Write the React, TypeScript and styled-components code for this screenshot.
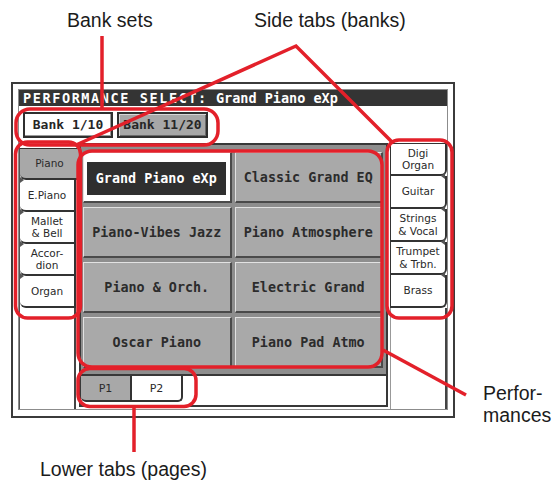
import React from "react";
import styled, { createGlobalStyle } from "styled-components";

const RED = "#e3202a";
const LCD = `"DejaVu Sans Mono", "Liberation Mono", monospace`;
const SMALL = `"DejaVu Sans", "Liberation Sans", sans-serif`;

const GlobalStyle = createGlobalStyle`
  html, body { margin: 0; padding: 0; background: #fff; }
  body { font-family: "Liberation Sans", Arial, sans-serif; }
`;

const Page = styled.div`
  position: relative;
  width: 554px;
  height: 482px;
  overflow: hidden;
  color: #1b1b1b;
`;

const TopLabels = styled.div`
  display: grid;
  grid-template-columns: 187px auto;
  height: 82px;
  padding: 7px 0 0 67px;
  box-sizing: border-box;
`;

const Caption = styled.div`
  font-size: 19.5px;
  line-height: 26px;
  white-space: nowrap;
`;

const SideCaption = styled(Caption)`
  margin: 300px 0 0 28px;
  line-height: 22px;
`;

const BottomCaption = styled(Caption)`
  margin: 38px 0 0 40px;
`;

const Middle = styled.div`
  display: flex;
  align-items: flex-start;
  height: 336px;
`;

const Screen = styled.div`
  width: 444px;
  height: 336px;
  margin-left: 11px;
  box-sizing: border-box;
  border: 2px solid #3b3b3b;
  padding: 5px 5px 6px 5px;
  background: #fff;
`;

const Panel = styled.div`
  height: 100%;
  box-sizing: border-box;
  border: 1px solid #8c8c8c;
  display: flex;
  flex-direction: column;
`;

const TitleBar = styled.div`
  height: 16px;
  background: #343434;
  color: #fff;
  font: bold 13.5px/16px ${LCD};
  padding-left: 4px;
  white-space: nowrap;
  overflow: hidden;
`;

const TitleCaps = styled.span`
  letter-spacing: 1.6px;
`;

const BankRow = styled.div`
  display: flex;
  gap: 4px;
  padding: 6px 0 0 4px;
`;

const BankTab = styled.div<{ $active?: boolean; $w: number }>`
  width: ${(p) => p.$w}px;
  height: 26px;
  box-sizing: border-box;
  border: 2px solid #2f2f2f;
  background: ${(p) => (p.$active ? "#fff" : "#a7a7a7")};
  box-shadow: ${(p) =>
    p.$active ? "inset -1px -1px 0 #9a9a9a" : "inset 1px 1px 0 #d6d6d6, inset -1px -1px 0 #6a6a6a"};
  font: bold 13px/22px ${LCD};
  color: #262626;
  text-align: center;
  white-space: nowrap;
`;

const Body = styled.div`
  display: flex;
  flex: 1;
  min-height: 0;
  margin-top: 5px;
`;

const LeftCol = styled.div`
  width: 60px;
  box-sizing: border-box;
  border-left: 1px solid #555;
  padding-top: 5px;
  display: flex;
  flex-direction: column;
`;

const RightCol = styled.div`
  width: 59px;
  box-sizing: border-box;
  padding-left: 2px;
  display: flex;
  flex-direction: column;
`;

const SideTab = styled.div<{ $active?: boolean; $side: "left" | "right"; $first?: boolean }>`
  position: relative;
  height: ${(p) => (p.$side === "left" ? 32 : 33)}px;
  flex: none;
  box-sizing: border-box;
  display: flex;
  align-items: center;
  justify-content: center;
  text-align: center;
  font: 10.5px/12.5px ${SMALL};
  color: #2a2a2a;
  background: ${(p) => (p.$active ? "#a8a8a8" : "#fff")};
  border-bottom: 2px solid #333;
  border-top: ${(p) => (p.$first ? "1px solid #333" : "none")};
  ${(p) =>
    p.$side === "left"
      ? `
    border-right: ${p.$active ? "none" : "2px solid #333"};
    margin-right: ${p.$active ? 0 : 3}px;
    border-bottom-left-radius: 6px;
  `
      : `
    border-left: 1px solid #333;
    border-right: 2px solid #333;
    border-bottom-right-radius: 6px;
  `}
  ${(p) =>
    p.$first
      ? ""
      : `
    &::before {
      content: "";
      position: absolute;
      top: -3px;
      ${p.$side === "left" ? "left: 0; border-left: 4px solid #555;" : "right: 0; border-right: 4px solid #555;"}
      border-top: 3px solid transparent;
      border-bottom: 3px solid transparent;
    }
  `}
`;

const SideFill = styled.div<{ $side: "left" | "right" }>`
  flex: 1;
  ${(p) =>
    p.$side === "left"
      ? "margin-right: 3px; border-right: 2px solid #444;"
      : "border-left: 1px solid #999; border-right: 2px solid #444;"}
`;

const Center = styled.div`
  width: 309px;
  display: flex;
  flex-direction: column;
`;

const GridFrame = styled.div`
  height: 233px;
  box-sizing: border-box;
  border: 2px solid #383838;
  background: #8e8e8e;
  padding: 7px 3px 6px 2px;
  display: grid;
  grid-template-columns: 1fr 1fr;
  grid-template-rows: repeat(4, 51px);
  gap: 4px 3px;
`;

const Cell = styled.div<{ $selected?: boolean }>`
  box-sizing: border-box;
  display: flex;
  align-items: ${(p) => (p.$selected ? "stretch" : "center")};
  justify-content: center;
  background: ${(p) => (p.$selected ? "#fff" : "#a9a9a9")};
  border-top: 1px solid #e2e2e2;
  border-left: 1px solid #e2e2e2;
  border-right: 2px solid #4a4a4a;
  border-bottom: 2px solid #4a4a4a;
  padding: ${(p) => (p.$selected ? "9px 4px 6px 3px" : "0")};
  font: bold 13.4px ${LCD};
  color: #2c2c2c;
  white-space: nowrap;
`;

const SelectedBox = styled.div`
  flex: 1;
  display: flex;
  align-items: center;
  justify-content: center;
  background: #2f2f2f;
  color: #fff;
`;

const LowerStrip = styled.div`
  height: 31px;
  box-sizing: border-box;
  display: flex;
  align-items: flex-start;
  border: 2px solid #383838;
  border-top: none;
  background: #fff;
`;

const PageTab = styled.div<{ $active?: boolean; $w: number }>`
  width: ${(p) => p.$w}px;
  height: 26px;
  box-sizing: border-box;
  display: flex;
  align-items: center;
  justify-content: center;
  font: 11px ${SMALL};
  color: #2a2a2a;
  background: ${(p) => (p.$active ? "#a8a8a8" : "#fff")};
  border-bottom: 2px solid #333;
  ${(p) =>
    p.$active
      ? "border-bottom-left-radius: 5px;"
      : "border-left: 2px solid #333; border-right: 2px solid #333; border-bottom-right-radius: 5px;"}
`;

const Overlay = styled.svg`
  position: absolute;
  left: 0;
  top: 0;
  pointer-events: none;
`;

const leftTabs = [
  { label: ["Piano"], active: true },
  { label: ["E.Piano"] },
  { label: ["Mallet", "& Bell"] },
  { label: ["Accor-", "dion"] },
  { label: ["Organ"] },
];

const rightTabs = [
  { label: ["Digi", "Organ"] },
  { label: ["Guitar"] },
  { label: ["Strings", "& Vocal"] },
  { label: ["Trumpet", "& Trbn."] },
  { label: ["Brass"] },
];

const performances = [
  "Grand Piano eXp",
  "Classic Grand EQ",
  "Piano-Vibes Jazz",
  "Piano Atmosphere",
  "Piano & Orch.",
  "Electric Grand",
  "Oscar Piano",
  "Piano Pad Atmo",
];

const Lines = ({ lines }: { lines: string[] }) => (
  <div>
    {lines.map((l) => (
      <div key={l}>{l}</div>
    ))}
  </div>
);

export default function App() {
  return (
    <Page>
      <GlobalStyle />
      <TopLabels>
        <Caption>Bank sets</Caption>
        <Caption>Side tabs (banks)</Caption>
      </TopLabels>

      <Middle>
        <Screen>
          <Panel>
            <TitleBar>
              <TitleCaps>PERFORMANCE SELECT:</TitleCaps> Grand Piano eXp
            </TitleBar>
            <BankRow>
              <BankTab $active $w={90}>Bank 1/10</BankTab>
              <BankTab $w={91}>Bank 11/20</BankTab>
            </BankRow>
            <Body>
              <LeftCol>
                {leftTabs.map((t, i) => (
                  <SideTab key={t.label.join()} $side="left" $active={t.active} $first={i === 0}>
                    <Lines lines={t.label} />
                  </SideTab>
                ))}
                <SideFill $side="left" />
              </LeftCol>
              <Center>
                <GridFrame>
                  {performances.map((name, i) =>
                    i === 0 ? (
                      <Cell key={name} $selected>
                        <SelectedBox>{name}</SelectedBox>
                      </Cell>
                    ) : (
                      <Cell key={name}>{name}</Cell>
                    )
                  )}
                </GridFrame>
                <LowerStrip>
                  <PageTab $active $w={49}>P1</PageTab>
                  <PageTab $w={53}>P2</PageTab>
                </LowerStrip>
              </Center>
              <RightCol>
                {rightTabs.map((t, i) => (
                  <SideTab key={t.label.join()} $side="right" $first={i === 0}>
                    <Lines lines={t.label} />
                  </SideTab>
                ))}
                <SideFill $side="right" />
              </RightCol>
            </Body>
          </Panel>
        </Screen>
        <SideCaption>
          Perfor-
          <br />
          mances
        </SideCaption>
      </Middle>

      <BottomCaption>Lower tabs (pages)</BottomCaption>

      <Overlay width={554} height={482} viewBox="0 0 554 482">
        <g fill="none" stroke={RED} strokeWidth={3.5} strokeLinejoin="miter">
          <line x1={102} y1={36} x2={102} y2={109} />
          <polyline points="76,145 296,46 392,142" />
          <rect x={16} y={109} width={202} height={36} rx={14} />
          <rect x={15.5} y={142} width={65} height={176} rx={12} />
          <rect x={387} y={140} width={65} height={178} rx={12} />
          <rect x={78} y={151} width={304} height={216} rx={14} />
          <rect x={78} y={368.5} width={118} height={38} rx={12} />
          <line x1={383} y1={350} x2={466} y2={395} />
          <line x1={134} y1={407} x2={134} y2={452} />
        </g>
      </Overlay>
    </Page>
  );
}
